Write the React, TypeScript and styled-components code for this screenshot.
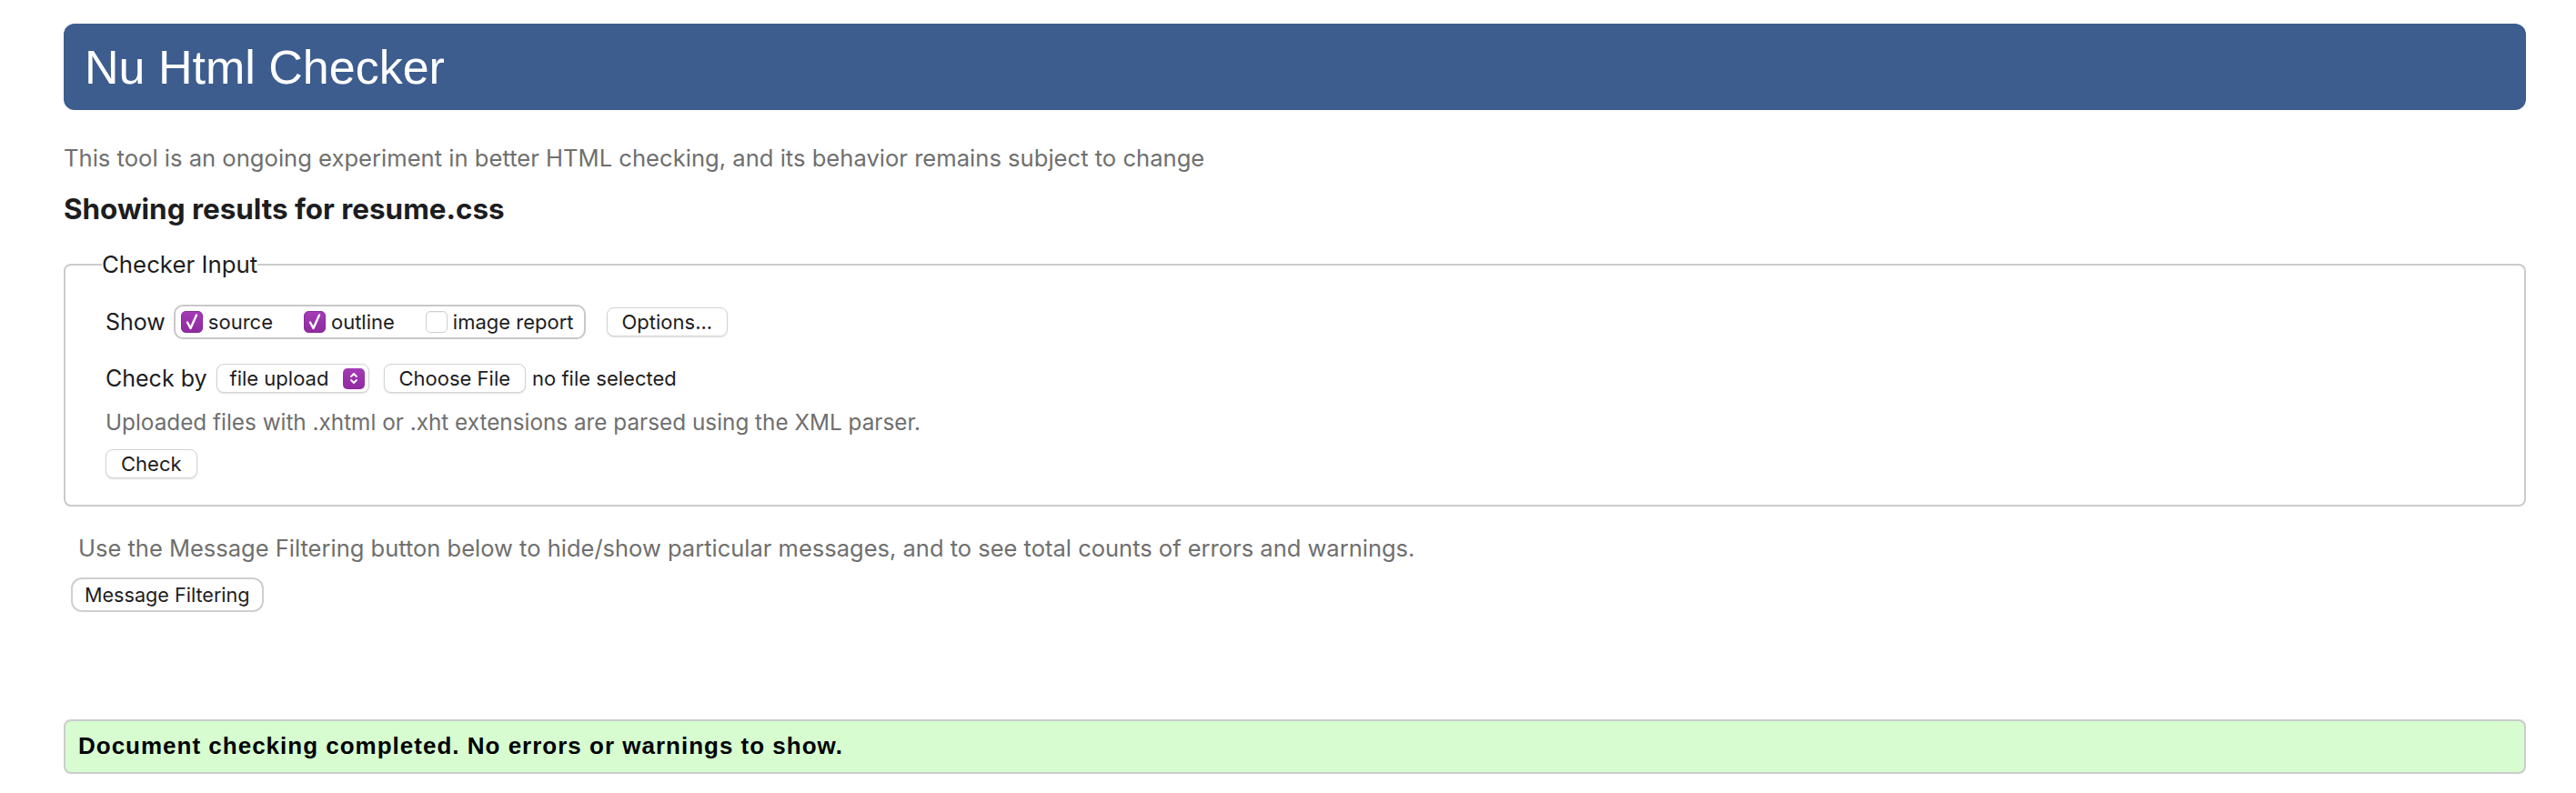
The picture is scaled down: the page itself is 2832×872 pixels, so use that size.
import React from "react";
import styled, { createGlobalStyle } from "styled-components";

const GlobalStyle = createGlobalStyle`
  body {
    margin: 0;
    background: #ffffff;
  }
`;

const Page = styled.div`
  padding: 26px 55px 40px 70px;
  font-family: Inter, "Noto Sans", sans-serif;
  color: #1d1d1f;
`;

const Banner = styled.header`
  height: 95px;
  display: flex;
  align-items: center;
  padding-left: 23px;
  background: #3d5d8f;
  border-radius: 12px;
`;

const BannerTitle = styled.h1`
  margin: 0;
  font-family: "Liberation Sans", Arial, sans-serif;
  font-weight: 400;
  font-size: 52px;
  line-height: 1;
  color: #ffffff;
`;

const Note = styled.p<{ $top: number; $indent?: number; $size: number }>`
  margin: ${({ $top }) => $top}px 0 0 ${({ $indent }) => $indent || 0}px;
  font-size: ${({ $size }) => $size}px;
  line-height: 30px;
  color: #6f6f6f;
`;

const ResultsHeading = styled.h2`
  margin: 22px 0 0;
  font-size: 31.4px;
  font-weight: 700;
  line-height: 38px;
  color: #1d1d1f;
`;

const InputFieldset = styled.fieldset`
  margin: 27px 0 0;
  padding: 29px 44px 29px;
  border: 2px solid #cbcbcb;
  border-radius: 8px;
  min-width: 0;
`;

const Legend = styled.legend`
  margin-left: -4px;
  padding: 0;
  font-size: 25.8px;
  line-height: 30px;
  color: #1d1d1f;
`;

const Row = styled.div<{ $top?: number }>`
  display: flex;
  align-items: center;
  margin-top: ${({ $top }) => $top || 0}px;
`;

const RowLabel = styled.span<{ $gap: number }>`
  margin-right: ${({ $gap }) => $gap}px;
  font-size: 25px;
  line-height: 30px;
  color: #1d1d1f;
`;

const ShowGroup = styled.div`
  height: 38px;
  box-sizing: border-box;
  display: flex;
  align-items: center;
  gap: 34px;
  padding: 0 11px 0 6px;
  border: 2px solid #c8c8c8;
  border-radius: 10px;
  margin-right: 23px;
`;

const CheckItem = styled.label`
  display: flex;
  align-items: center;
  gap: 6px;
  font-size: 22px;
  line-height: 26px;
  color: #1d1d1f;
`;

const Box = styled.span<{ $checked: boolean }>`
  width: 24px;
  height: 24px;
  box-sizing: border-box;
  border-radius: 5px;
  display: flex;
  align-items: center;
  justify-content: center;
  background: ${({ $checked }) =>
    $checked ? "linear-gradient(#a43bb6, #8f2aa0)" : "#ffffff"};
  border: 1px solid ${({ $checked }) => ($checked ? "#8a2a9b" : "#cfcfcf")};
  box-shadow: ${({ $checked }) =>
    $checked ? "none" : "inset 0 1px 1px rgba(0,0,0,0.06)"};
`;

const Button = styled.button<{ $gap?: number }>`
  height: 32px;
  padding: 0 16px;
  margin-right: ${({ $gap }) => $gap || 0}px;
  font-family: Inter, "Noto Sans", sans-serif;
  font-size: 22px;
  color: #1d1d1f;
  background: #ffffff;
  border: 1px solid #d3d3d3;
  border-radius: 8px;
  box-shadow: 0 1px 2px rgba(0, 0, 0, 0.12);
`;

const Select = styled.div`
  height: 32px;
  box-sizing: border-box;
  width: 168px;
  display: flex;
  align-items: center;
  justify-content: space-between;
  padding: 0 4px 0 14px;
  margin-right: 16px;
  font-size: 22px;
  color: #1d1d1f;
  background: #ffffff;
  border: 1px solid #d3d3d3;
  border-radius: 8px;
  box-shadow: 0 1px 2px rgba(0, 0, 0, 0.12);
`;

const Stepper = styled.span`
  width: 24px;
  height: 23px;
  border-radius: 5px;
  background: linear-gradient(#a43bb6, #8f2aa0);
  display: flex;
  align-items: center;
  justify-content: center;
`;

const FileStatus = styled.span`
  margin-left: -9px;
  font-size: 22px;
  color: #1d1d1f;
`;

const FilterButton = styled.button`
  margin: 17px 0 0 8px;
  height: 38px;
  padding: 0 13px;
  font-family: Inter, "Noto Sans", sans-serif;
  font-size: 21.6px;
  color: #1d1d1f;
  background: #ffffff;
  border: 2px solid #cfcfcf;
  border-radius: 12px;
`;

const Success = styled.div`
  margin-top: 118px;
  padding: 12px 14px 14px;
  background: #d6fcd0;
  border: 2px solid #cccccc;
  border-radius: 8px;
  font-family: "Liberation Sans", Arial, sans-serif;
  font-weight: 700;
  font-size: 26px;
  letter-spacing: 1px;
  line-height: 30px;
  color: #000000;
`;

const Tick = () => (
  <svg width="16" height="20" viewBox="0 0 16 20">
    <path
      d="M3 10.5 L6.5 17 L13 2.5"
      fill="none"
      stroke="#ffffff"
      strokeWidth="2.4"
      strokeLinecap="round"
      strokeLinejoin="round"
    />
  </svg>
);

const Chevrons = () => (
  <svg width="12" height="18" viewBox="0 0 12 18">
    <path
      d="M3 7 L6 4 L9 7 M3 11 L6 14 L9 11"
      fill="none"
      stroke="#ffffff"
      strokeWidth="1.8"
      strokeLinecap="round"
      strokeLinejoin="round"
    />
  </svg>
);

const options = [
  { name: "source", checked: true },
  { name: "outline", checked: true },
  { name: "image report", checked: false },
];

export default function App() {
  return (
    <Page>
      <GlobalStyle />
      <Banner>
        <BannerTitle>Nu Html Checker</BannerTitle>
      </Banner>
      <Note $top={38} $size={25.6}>
        This tool is an ongoing experiment in better HTML checking, and its
        behavior remains subject to change
      </Note>
      <ResultsHeading>Showing results for resume.css</ResultsHeading>

      <InputFieldset>
        <Legend>Checker Input</Legend>
        <Row>
          <RowLabel $gap={9}>Show</RowLabel>
          <ShowGroup>
            {options.map((o) => (
              <CheckItem key={o.name}>
                <Box $checked={o.checked}>{o.checked && <Tick />}</Box>
                {o.name}
              </CheckItem>
            ))}
          </ShowGroup>
          <Button>Options...</Button>
        </Row>
        <Row $top={27}>
          <RowLabel $gap={10}>Check by</RowLabel>
          <Select>
            file upload
            <Stepper>
              <Chevrons />
            </Stepper>
          </Select>
          <Button $gap={16}>Choose File</Button>
          <FileStatus>no file selected</FileStatus>
        </Row>
        <Note $top={17} $size={24.3}>
          Uploaded files with .xhtml or .xht extensions are parsed using the
          XML parser.
        </Note>
        <Row $top={15}>
          <Button>Check</Button>
        </Row>
      </InputFieldset>

      <Note $top={31} $indent={16} $size={25.5}>
        Use the Message Filtering button below to hide/show particular
        messages, and to see total counts of errors and warnings.
      </Note>
      <FilterButton>Message Filtering</FilterButton>

      <Success>
        Document checking completed. No errors or warnings to show.
      </Success>
    </Page>
  );
}
